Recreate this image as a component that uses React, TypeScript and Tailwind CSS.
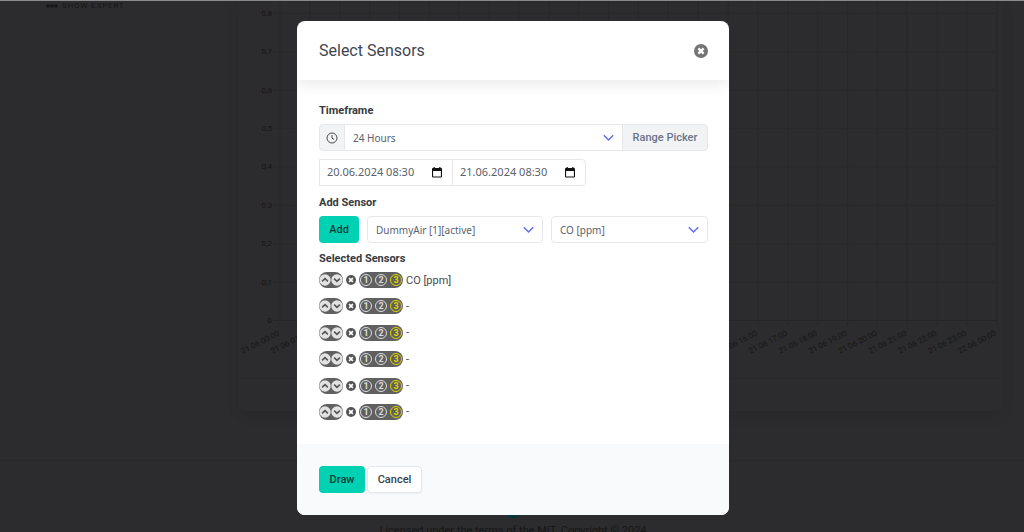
import React from "react";

const hours = Array.from({ length: 25 }, (_, i) => i);
const levels = Array.from({ length: 9 }, (_, i) => i);
const sensors = ["CO [ppm]", "-", "-", "-", "-", "-"];

const label = "block font-[Roboto,sans-serif] text-[11px] leading-[18px] font-bold text-[#363a40]";
const field = "h-[27px] border border-[#e5e7eb] bg-white font-['Noto_Sans',sans-serif] text-[#5b616b] outline-none";
const button = "h-[27px] pt-0.5 font-[Roboto,sans-serif] text-[11px] font-medium";

function Chevron() {
  return (
    <svg className="pointer-events-none absolute right-[9px] top-[10px]" width="11" height="8" viewBox="0 0 11 8" fill="none" stroke="#5a6cf8" strokeWidth="1.4" aria-hidden="true">
      <path d="M0.8 1.2 5.5 6l4.7-4.8" />
    </svg>
  );
}

function Select({ id, name, value, className, rounded }: { id: string; name: string; value: string; className: string; rounded: string }) {
  return (
    <div className={`relative ${className}`}>
      <select id={id} aria-label={name} className={`${field} ${rounded} block w-full appearance-none pl-2 pr-6 pt-px text-[10px]`}>
        <option>{value}</option>
      </select>
      <Chevron />
    </div>
  );
}

function DateField({ name, value, className }: { name: string; value: string; className: string }) {
  return (
    <div className={`${field} ${className} flex w-[134px] items-center pl-[7px] pr-[10px] text-[11px]`}>
      <input aria-label={name} defaultValue={value} className="w-full min-w-0 bg-transparent outline-none" />
      <button aria-label={`Open calendar, ${name}`}>
        <svg width="10" height="11" viewBox="0 0 10 11" className="block" aria-hidden="true">
          <path d="M1.5 0h1.3v1h4.4V0h1.3v1H9a1 1 0 0 1 1 1v7.6a1 1 0 0 1-1 1H1a1 1 0 0 1-1-1V2a1 1 0 0 1 1-1h.5zM1.1 4v5.6h7.8V4z" fill="#111" fillRule="evenodd" />
        </svg>
      </button>
    </div>
  );
}

function Arrow({ up }: { up?: boolean }) {
  return (
    <button aria-label={up ? "Move up" : "Move down"}>
      <svg width="12" height="12" viewBox="0 0 12 12" className="block" aria-hidden="true">
        <circle cx="6" cy="6" r="5.7" fill="#e2e2e2" />
        <path d={up ? "M3.1 7.3 6 4.6l2.9 2.7" : "M3.1 4.7 6 7.4l2.9-2.7"} fill="none" stroke="#555" strokeWidth="1.6" />
      </svg>
    </button>
  );
}

function Cross({ size, color }: { size: number; color: string }) {
  return (
    <svg width={size} height={size} viewBox="0 0 14 14" className="block" aria-hidden="true">
      <circle cx="7" cy="7" r="7" fill={color} />
      <path d="m4.4 4.4 5.2 5.2m0-5.2-5.2 5.2" stroke="#fff" strokeWidth="2.3" />
    </svg>
  );
}

function SensorRow({ text }: { text: string }) {
  return (
    <li className="flex h-4 items-center font-[Roboto,sans-serif] text-[11px] leading-4 text-[#4a4a4a]">
      <span className="flex h-4 w-6 items-center justify-center rounded-full bg-[#606060]">
        <Arrow up />
        <Arrow />
      </span>
      <button aria-label="Remove" className="mx-[3px]">
        <Cross size={10} color="#555555" />
      </button>
      <span className="mr-[3px] flex h-4 w-[44px] items-center justify-between rounded-full bg-[#606060] px-px">
        {[1, 2, 3].map((n) => (
          <button
            key={n}
            className={`flex size-[12px] items-center justify-center rounded-full border text-[9px] leading-[10px] font-bold ${n === 3 ? "border-[#e0d400] text-[#e0d400]" : "border-[#dcdcdc] text-[#dcdcdc]"}`}
          >
            {n}
          </button>
        ))}
      </span>
      <span className="pt-px">{text}</span>
    </li>
  );
}

function Chart() {
  return (
    <svg viewBox="0 0 764 377" className="block w-full font-[Roboto,sans-serif]" fontSize="8" fill="#161617" aria-hidden="true">
      {levels.map((i) => (
        <g key={i}>
          <path d={`M34 ${319.5 - i * 38.4}H758`} stroke={i ? "#29292b" : "#252527"} />
          <text x="33" y={322 - i * 38.4} textAnchor="end">
            {i ? `0,${i}` : "0"}
          </text>
        </g>
      ))}
      {hours.map((h) => (
        <g key={h}>
          <path d={`M${41 + h * 29.87} 0V325`} stroke="#29292b" />
          <text transform={`translate(${41 + h * 29.87} 334) rotate(-27)`} textAnchor="end">
            {h === 24 ? "22 06 00:00" : `21 06 ${String(h).padStart(2, "0")}:00`}
          </text>
        </g>
      ))}
    </svg>
  );
}

function Page() {
  return (
    <div className="flex min-h-screen flex-col border-t border-[#8b8b8b] bg-[#2c2c2e] font-[Roboto,sans-serif] text-[#161617]">
      <div className="flex">
        <div className="w-[239px] shrink-0 pl-[46px]">
          <div className="flex items-center gap-1 text-[8px] leading-[10px] tracking-widest">
            <svg width="12" height="4" viewBox="0 0 12 4" fill="currentColor" aria-hidden="true">
              <circle cx="2" cy="2" r="1.8" />
              <circle cx="6" cy="2" r="1.8" />
              <circle cx="10" cy="2" r="1.8" />
            </svg>
            SHOW EXPERT
          </div>
        </div>
        <div className="mr-[21px] min-w-0 flex-1 rounded-b-md pb-[32px] shadow-[0_5px_14px_rgba(0,0,0,0.07)]">
          <div className="border-b border-[#29292b]">
            <Chart />
          </div>
        </div>
      </div>
      <footer className="mt-[49px] flex flex-1 flex-col items-center border-t border-[#29292b] pl-[2px] pt-[33px] text-[11px]">
        <span className="size-[24px] rounded-full bg-[#08353a]" />
        <p className="mt-[5px] leading-[16px]">Licensed under the terms of the MIT. Copyright © 2024</p>
      </footer>
    </div>
  );
}

export default function App() {
  return (
    <div className="relative h-screen overflow-hidden">
      <Page />
      <div className="absolute inset-0 flex items-start justify-center pl-[2px] pt-[21px]">
        <section role="dialog" aria-labelledby="title" className="w-[432px] overflow-hidden rounded-lg bg-white">
          <header className="relative flex h-[59px] items-center justify-between pl-[22px] pr-[21px] shadow-[0_5px_14px_rgba(10,10,10,0.08)]">
            <h1 id="title" className="font-[Roboto,sans-serif] text-[16px] text-[#404650]">Select Sensors</h1>
            <button aria-label="Close">
              <Cross size={14} color="#757575" />
            </button>
          </header>

          <div className="pb-[24px] pl-[22px] pr-[21px] pt-[22px]">
            <label htmlFor="timeframe" className={label}>Timeframe</label>
            <div className="mt-1 flex">
              <span className="flex h-[27px] w-[26px] items-center justify-center rounded-l border border-[#e5e7eb] bg-[#f2f3f5]">
                <svg width="12" height="12" viewBox="0 0 12 12" fill="none" stroke="#4a4a4a" aria-hidden="true">
                  <circle cx="6" cy="6" r="5" />
                  <path d="M6 3v3.2l2 1.2" />
                </svg>
              </span>
              <Select id="timeframe" name="Timeframe" value="24 Hours" className="-ml-px flex-1" rounded="rounded-none" />
              <button className={`${button} -ml-px w-[86px] rounded-r border border-[#e5e7eb] bg-[#f2f3f5] text-[#69748c]`}>
                Range Picker
              </button>
            </div>
            <div className="mt-2 flex">
              <DateField name="Start" value="20.06.2024 08:30" className="" />
              <DateField name="End" value="21.06.2024 08:30" className="-ml-px rounded-r" />
            </div>

            <label htmlFor="device" className={`${label} mt-2`}>Add Sensor</label>
            <div className="mt-1 flex gap-2">
              <button className={`${button} w-[40px] rounded bg-[#00d1b2] text-[#0b3d38]`}>Add</button>
              <Select id="device" name="Device" value="DummyAir [1][active]" className="w-[176px]" rounded="rounded" />
              <Select id="sensor" name="Sensor" value="CO [ppm]" className="flex-1" rounded="rounded" />
            </div>

            <h2 className={`${label} mt-[7px]`}>Selected Sensors</h2>
            <ul className="mt-1 flex h-[148px] flex-col justify-between">
              {sensors.map((s, i) => (
                <SensorRow key={i} text={s} />
              ))}
            </ul>
          </div>

          <footer className="flex h-[71px] items-center gap-[2px] bg-[#f9fafb] pl-[22px] pr-[21px]">
            <button className={`${button} w-[46px] rounded bg-[#00d1b2] text-[#0b3d38]`}>Draw</button>
            <button className={`${button} w-[55px] rounded border border-[#e5e7eb] bg-white text-[#363f4f] shadow-xs`}>Cancel</button>
          </footer>
        </section>
      </div>
    </div>
  );
}
